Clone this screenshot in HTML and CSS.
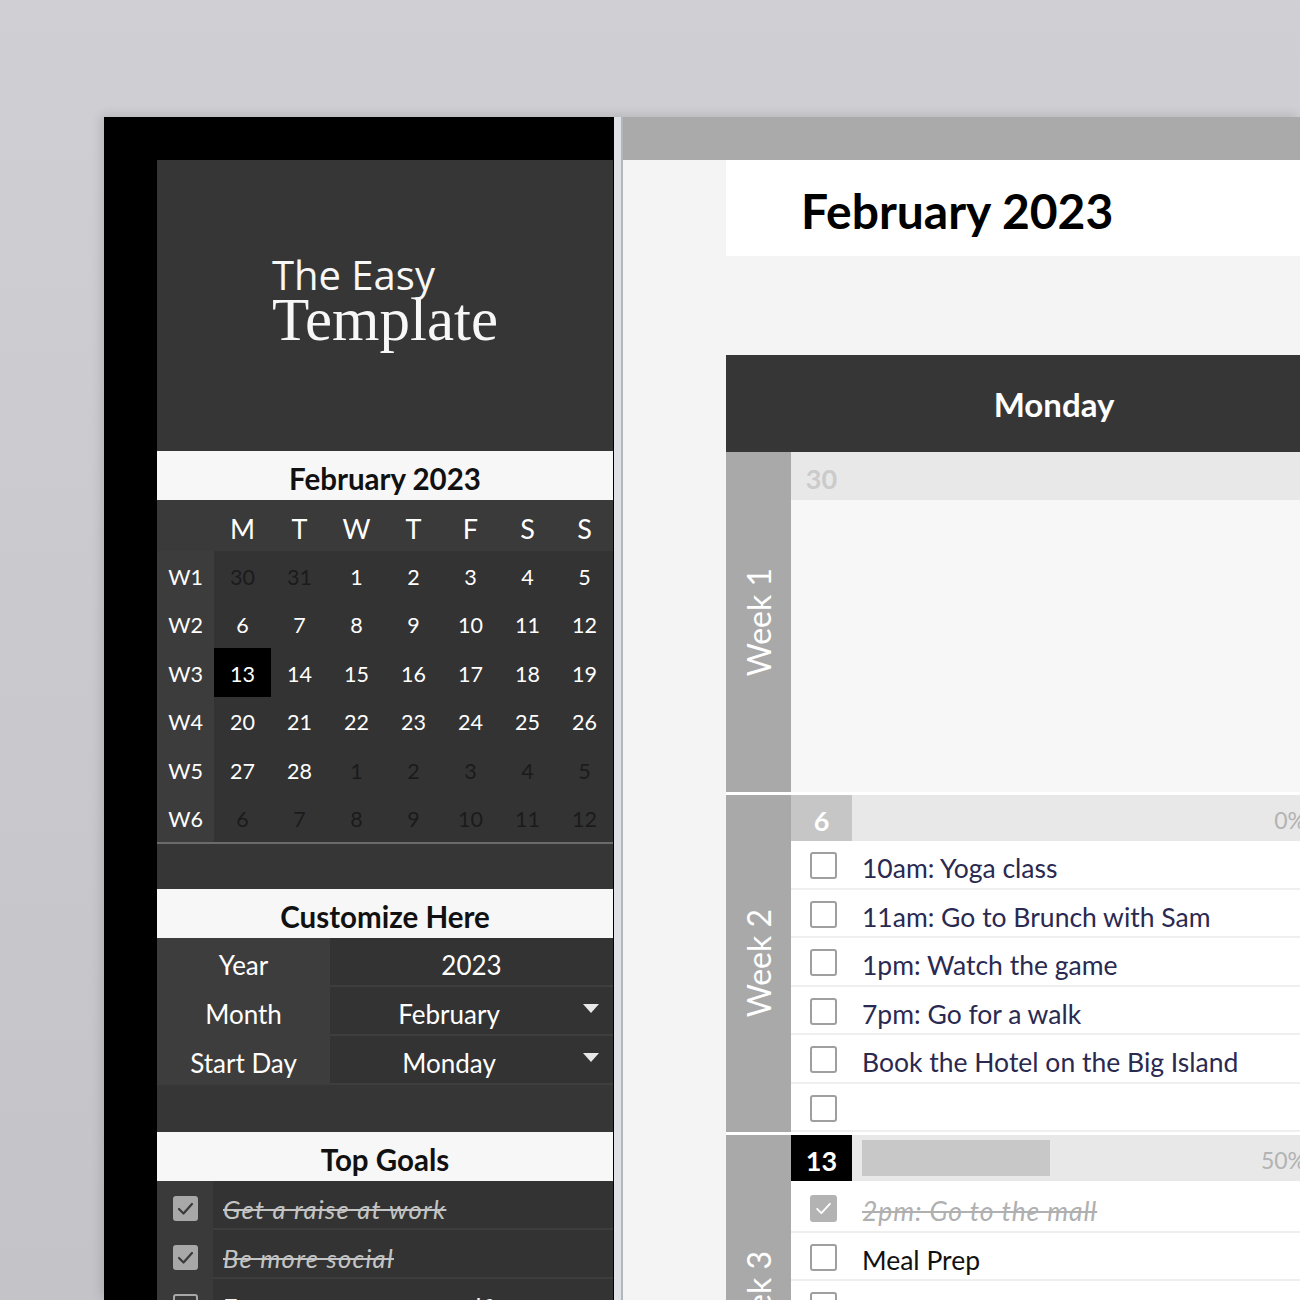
FILE: index.html
```html
<!DOCTYPE html>
<html lang="en">
<head>
<meta charset="utf-8">
<title>The Easy Template - Planner</title>
<link rel="stylesheet" href="styles.css">
</head>
<body>
<div class="stage">
  <div class="screen">
    <aside class="side">
      <div class="panel">
        <div class="logo">
          <div class="logo-text">
            <span class="logo-top">The Easy</span>
            <span class="logo-bottom">Template</span>
          </div>
        </div>
        <div class="bar-title">February 2023</div>
        <div class="mini-cal">
          <div class="mc mc-h"></div>
          <div class="mc mc-h">M</div><div class="mc mc-h">T</div><div class="mc mc-h">W</div><div class="mc mc-h">T</div><div class="mc mc-h">F</div><div class="mc mc-h">S</div><div class="mc mc-h">S</div>

          <div class="mc mc-wk">W1</div>
          <div class="mc mc-d out">30</div><div class="mc mc-d out">31</div><div class="mc mc-d">1</div><div class="mc mc-d">2</div><div class="mc mc-d">3</div><div class="mc mc-d">4</div><div class="mc mc-d">5</div>

          <div class="mc mc-wk">W2</div>
          <div class="mc mc-d">6</div><div class="mc mc-d">7</div><div class="mc mc-d">8</div><div class="mc mc-d">9</div><div class="mc mc-d">10</div><div class="mc mc-d">11</div><div class="mc mc-d">12</div>

          <div class="mc mc-wk">W3</div>
          <div class="mc mc-d today">13</div><div class="mc mc-d">14</div><div class="mc mc-d">15</div><div class="mc mc-d">16</div><div class="mc mc-d">17</div><div class="mc mc-d">18</div><div class="mc mc-d">19</div>

          <div class="mc mc-wk">W4</div>
          <div class="mc mc-d">20</div><div class="mc mc-d">21</div><div class="mc mc-d">22</div><div class="mc mc-d">23</div><div class="mc mc-d">24</div><div class="mc mc-d">25</div><div class="mc mc-d">26</div>

          <div class="mc mc-wk">W5</div>
          <div class="mc mc-d">27</div><div class="mc mc-d">28</div><div class="mc mc-d out">1</div><div class="mc mc-d out">2</div><div class="mc mc-d out">3</div><div class="mc mc-d out">4</div><div class="mc mc-d out">5</div>

          <div class="mc mc-wk">W6</div>
          <div class="mc mc-d out">6</div><div class="mc mc-d out">7</div><div class="mc mc-d out">8</div><div class="mc mc-d out">9</div><div class="mc mc-d out">10</div><div class="mc mc-d out">11</div><div class="mc mc-d out">12</div>
        </div>
        <div class="spacer s1"></div>
        <div class="bar-title">Customize Here</div>
        <div class="settings">
          <div class="set-row">
            <div class="set-label">Year</div>
            <div class="set-value"><span class="set-text">2023</span></div>
          </div>
          <div class="set-row">
            <div class="set-label">Month</div>
            <div class="set-value"><span class="set-text">February</span><span class="set-arrow"><span class="tri"></span></span></div>
          </div>
          <div class="set-row">
            <div class="set-label">Start Day</div>
            <div class="set-value"><span class="set-text">Monday</span><span class="set-arrow"><span class="tri"></span></span></div>
          </div>
        </div>
        <div class="spacer s2"></div>
        <div class="bar-title">Top Goals</div>
        <div class="goals">
          <div class="goal">
            <div class="goal-cb"><span class="gbox checked"><svg viewBox="0 0 25 25" width="25" height="25"><polyline points="6,13 10.5,17.5 19,8" fill="none" stroke="#3a3a3a" stroke-width="2.2" stroke-linecap="round" stroke-linejoin="round"/></svg></span></div>
            <div class="goal-text done">Get a raise at work</div>
          </div>
          <div class="goal">
            <div class="goal-cb"><span class="gbox checked"><svg viewBox="0 0 25 25" width="25" height="25"><polyline points="6,13 10.5,17.5 19,8" fill="none" stroke="#3a3a3a" stroke-width="2.2" stroke-linecap="round" stroke-linejoin="round"/></svg></span></div>
            <div class="goal-text done">Be more social</div>
          </div>
          <div class="goal">
            <div class="goal-cb"><span class="gbox"></span></div>
            <div class="goal-text">Focus more on myself</div>
          </div>
        </div>
      </div>
    </aside>
    <div class="divider"></div>
    <main class="main">
      <div class="main-top"></div>
      <div class="main-body">
        <div class="title-box">February 2023</div>
        <div class="day-col">
          <div class="day-head">Monday</div>

          <div class="week first">
            <div class="wk-label"><span>Week 1</span></div>
            <div class="days">
              <div class="dh tall"><div class="dnum past">30</div></div>
              <div class="w1-body"></div>
            </div>
          </div>

          <div class="week">
            <div class="wk-label"><span>Week 2</span></div>
            <div class="days">
              <div class="dh"><div class="dnum gray">6</div><div class="track"></div><div class="pct">0%</div></div>
              <div class="task"><span class="cb"></span><span class="task-text">10am: Yoga class</span></div>
              <div class="task"><span class="cb"></span><span class="task-text">11am: Go to Brunch with Sam</span></div>
              <div class="task"><span class="cb"></span><span class="task-text">1pm: Watch the game</span></div>
              <div class="task"><span class="cb"></span><span class="task-text">7pm: Go for a walk</span></div>
              <div class="task"><span class="cb"></span><span class="task-text">Book the Hotel on the Big Island</span></div>
              <div class="task"><span class="cb"></span><span class="task-text"></span></div>
            </div>
          </div>

          <div class="week">
            <div class="wk-label"><span>Week 3</span></div>
            <div class="days">
              <div class="dh w3"><div class="dnum today">13</div><div class="track"><div class="fill" style="width:50%"></div></div><div class="pct">50%</div></div>
              <div class="task"><span class="cb checked"><svg viewBox="0 0 27 27" width="23" height="23"><polyline points="6,14 11,19 21,8" fill="none" stroke="#ffffff" stroke-width="2.2" stroke-linecap="round" stroke-linejoin="round"/></svg></span><span class="task-text done">2pm: Go to the mall</span></div>
              <div class="task"><span class="cb"></span><span class="task-text black">Meal Prep</span></div>
              <div class="task"><span class="cb"></span><span class="task-text"></span></div>
              <div class="task"><span class="cb"></span><span class="task-text"></span></div>
              <div class="task"><span class="cb"></span><span class="task-text"></span></div>
              <div class="task"><span class="cb"></span><span class="task-text"></span></div>
            </div>
          </div>
        </div>
      </div>
    </main>
  </div>
</div>
</body>
</html>
```

FILE: styles.css
```css
* {
  box-sizing: border-box;
  margin: 0;
  padding: 0;
}

html, body {
  width: 1300px;
  height: 1300px;
  overflow: hidden;
}

body {
  background: linear-gradient(180deg, #d0cfd4 0%, #cbcacf 40%, #c4c3c8 100%);
  font-family: Lato, "Liberation Sans", sans-serif;
}

.stage {
  height: 1300px;
  padding: 117px 0 0 104px;
  overflow: hidden;
}

.screen {
  display: flex;
  height: 1183px;
  box-shadow: -3px -2px 10px rgba(0, 0, 0, 0.12);
}

/* ---------- left side ---------- */
.side {
  width: 510px;
  flex: none;
  background: #000;
  padding: 43px 0 0 53px;
}

.panel {
  width: 456px;
  height: 100%;
  background: #363636;
}

.logo {
  height: 291px;
  padding-top: 95px;
}

.logo-text {
  width: max-content;
  margin: 0 auto;
  color: #f7f7f7;
}

.logo-top {
  display: block;
  font-family: "Open Sans", sans-serif;
  font-size: 40px;
  line-height: 40px;
}

.logo-bottom {
  display: block;
  font-family: "Liberation Serif", serif;
  font-size: 61px;
  line-height: 50px;
}

.bar-title {
  height: 49px;
  padding-top: 5px;
  background: #f7f7f7;
  color: #111;
  font-weight: 700;
  font-size: 29.5px;
  display: flex;
  align-items: center;
  justify-content: center;
}

.mini-cal {
  display: grid;
  grid-template-columns: repeat(8, 57px);
  grid-template-rows: 51px repeat(6, 48.5px);
  border-bottom: 2px solid #6b6b6b;
}

.mc {
  display: flex;
  align-items: center;
  justify-content: center;
  padding-top: 3px;
  color: #fff;
  font-size: 21.5px;
}

.mc-h {
  background: #3a3a3a;
  font-size: 27px;
  padding-top: 5px;
}

.mc-wk {
  background: #3c3c3c;
}

.mc-d {
  background: #333;
}

.mc-d.out {
  color: #1b1b1b;
}

.mc-d.today {
  background: #000;
}

.spacer.s1 {
  height: 45px;
}

.spacer.s2 {
  height: 47px;
}

.set-row {
  display: flex;
  height: 49px;
}

.set-label {
  width: 173px;
  background: #3d3d3d;
  color: #fff;
  font-size: 26px;
  padding-top: 5px;
  display: flex;
  align-items: center;
  justify-content: center;
}

.set-value {
  flex: 1;
  display: flex;
  align-items: center;
  background: #333;
  border-bottom: 2px solid #3e3e3e;
  color: #fff;
  font-size: 26px;
}

.set-text {
  flex: 1;
  text-align: center;
  padding-top: 6px;
}

.set-arrow {
  width: 45px;
  display: flex;
  justify-content: center;
  align-items: center;
  padding-bottom: 4px;
}

.tri {
  width: 0;
  height: 0;
  border-left: 8px solid transparent;
  border-right: 8px solid transparent;
  border-top: 9px solid #e8e8e8;
}

.goal {
  display: flex;
  height: 49px;
}

.goal-cb {
  width: 56px;
  background: #3a3a3a;
  padding-top: 5px;
  display: flex;
  align-items: center;
  justify-content: center;
}

.gbox {
  width: 25px;
  height: 25px;
  border-radius: 3px;
  border: 2px solid #a8a8a8;
  display: block;
}

.gbox.checked {
  background: #a8a8a8;
  border: none;
}

.gbox svg {
  display: block;
}

.goal-text {
  flex: 1;
  background: #333;
  border-bottom: 2px solid #3d3d3d;
  padding: 8px 0 0 10px;
  font-size: 25.5px;
  letter-spacing: 1.3px;
  color: #f0f0f0;
  display: flex;
  align-items: center;
  white-space: nowrap;
}

.goal-text.done {
  font-style: italic;
  color: #c4c4c4;
  text-decoration: line-through;
}

/* ---------- divider ---------- */
.divider {
  width: 9px;
  flex: none;
  background: #dee1e5;
  border-right: 2px solid #b3b6ba;
}

/* ---------- main ---------- */
.main {
  flex: 1;
  min-width: 0;
  overflow: hidden;
  background: #f4f4f4;
}

.main-top {
  height: 43px;
  background: #aaaaaa;
}

.main-body {
  padding-left: 103px;
}

.title-box {
  height: 96px;
  background: #fff;
  padding: 4px 0 0 75px;
  font-weight: 700;
  font-size: 48px;
  color: #000;
  display: flex;
  align-items: center;
}

.day-col {
  width: 656px;
  margin-top: 99px;
  background: #fff;
}

.day-head {
  height: 97px;
  background: #363636;
  color: #fff;
  font-size: 33px;
  font-weight: 700;
  display: flex;
  align-items: center;
  justify-content: center;
}

.week {
  display: flex;
  margin-top: 3px;
}

.week.first {
  margin-top: 0;
}

.wk-label {
  width: 65px;
  flex: none;
  background: #a9a9a9;
  color: #fff;
  font-size: 32px;
  display: flex;
  align-items: center;
  justify-content: center;
}

.wk-label span {
  writing-mode: vertical-rl;
  transform: rotate(180deg);
  line-height: 1;
}

.days {
  flex: 1;
}

.dh {
  height: 46px;
  background: #e8e8e8;
  display: flex;
  align-items: center;
}

.dh.tall {
  height: 48px;
}

.dh.w3 {
  height: 49px;
  border-bottom: 3px solid #fff;
}

.dnum {
  width: 61px;
  height: 100%;
  padding-top: 4px;
  display: flex;
  align-items: center;
  justify-content: center;
  font-weight: 700;
  font-size: 27px;
  color: #fff;
}

.dnum.past {
  color: #cbcbcb;
}

.dnum.gray {
  background: #c6c6c6;
}

.dnum.today {
  background: #000;
}

.track {
  width: 376px;
  height: 36px;
  margin-left: 10px;
}

.fill {
  height: 100%;
  background: #c8c8c8;
}

.pct {
  margin-left: auto;
  margin-right: 76px;
  width: 60px;
  padding-top: 3px;
  text-align: right;
  color: #b3b3b3;
  font-size: 23px;
}

.w1-body {
  height: 292px;
  background: #f7f7f7;
}

.task {
  height: 48.5px;
  display: flex;
  align-items: center;
  padding: 3px 0 0 19px;
  background: #fff;
  border-bottom: 2px solid #efefef;
}

.cb {
  width: 27px;
  height: 27px;
  flex: none;
  border: 2px solid #9f9f9f;
  border-radius: 3px;
  background: #fff;
  display: flex;
  align-items: center;
  justify-content: center;
}

.cb.checked {
  background: #b3b3b3;
  border-color: #b3b3b3;
}

.cb svg {
  display: block;
}

.task-text {
  margin-left: 25px;
  padding-top: 5px;
  font-size: 26.5px;
  color: #2a2950;
  white-space: nowrap;
}

.task-text.black {
  color: #111;
}

.task-text.done {
  font-style: italic;
  letter-spacing: 0.9px;
  color: #b0b0b0;
  text-decoration: line-through;
}
```
